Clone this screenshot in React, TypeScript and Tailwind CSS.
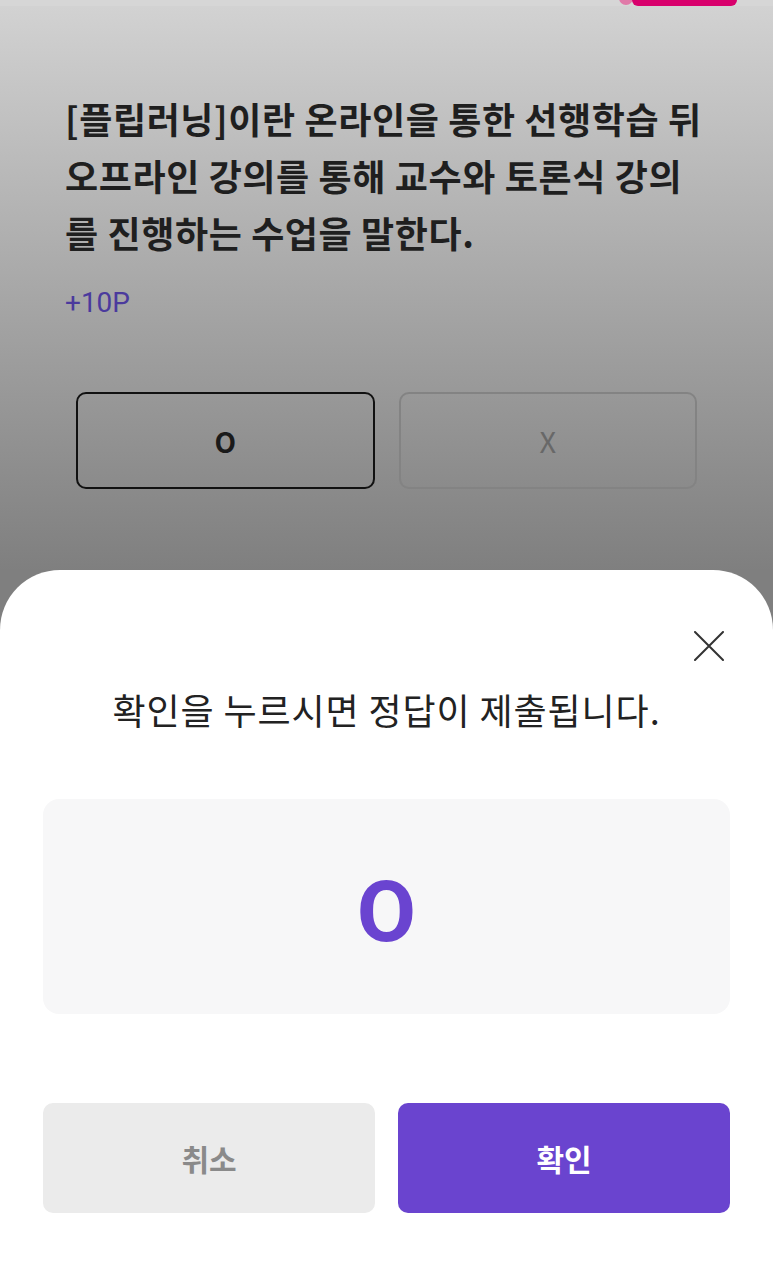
import React from "react";

const kr = "font-['Noto_Sans_CJK_KR',sans-serif]";
const roboto = "font-['Roboto','Noto_Sans_CJK_KR',sans-serif]";

function CloseIcon() {
  return (
    <svg width="30" height="30" viewBox="0 0 30 30" fill="none">
      <path d="M1 1L29 29M29 1L1 29" stroke="#333333" strokeWidth="2" strokeLinecap="round" />
    </svg>
  );
}

export default function App() {
  return (
    <div className={`w-full h-[1267px] flex flex-col bg-[#7f7f7f] overflow-hidden ${kr}`}>
      {/* dimmed page behind the sheet */}
      <div className="h-[571px] shrink-0 bg-linear-to-b from-[#d3d3d3] to-[#7f7f7f] flex flex-col">
        <div className="h-[6px] flex justify-end items-start pr-[36px] overflow-hidden bg-[#d6d6d6]">
          <div className="w-[14px] h-[14px] -mt-[9px] -mr-[1px] rounded-full bg-[#e07aa8]" />
          <div className="w-[105px] h-[16px] -mt-[10px] rounded-b-[6px] bg-[#d8006c]" />
        </div>

        <p className="mt-[84px] px-[65px] text-[36px] leading-[57px] tracking-[0.6px] font-bold text-[#1f1f1f]">
          [플립러닝]이란 온라인을 통한 선행학습 뒤
          <br />
          오프라인 강의를 통해 교수와 토론식 강의
          <br />를 진행하는 수업을 말한다.
        </p>

        <p className={`mt-[25px] px-[65px] text-[28px] leading-[34px] text-[#4b3a9d] ${roboto}`}>+10P</p>

        <div className="mt-[72px] mx-[76px] grid grid-cols-2 gap-[24px]">
          <button className="h-[97px] rounded-[10px] border-2 border-[#111111] flex items-center justify-center text-[28px] font-bold text-[#1a1a1a]">
            O
          </button>
          <button className="h-[97px] rounded-[10px] border-2 border-[#838383] flex items-center justify-center text-[29px] text-[#686868]">
            X
          </button>
        </div>
      </div>

      {/* bottom sheet */}
      <div className="-mt-px flex-1 bg-white rounded-t-[60px] flex flex-col">
        <div className="flex justify-end pr-[49px] pt-[61px]">
          <CloseIcon />
        </div>

        <h2 className="mt-[26px] text-center text-[36px] leading-[44px] tracking-[0.9px] text-[#222222]">
          확인을 누르시면 정답이 제출됩니다.
        </h2>

        <div className="mt-[68px] mx-[43px] h-[215px] pt-[10px] rounded-[16px] bg-[#f7f7f8] flex items-center justify-center">
          <span className={`text-[86px] leading-none font-bold text-[#6a44d0] ${roboto}`}>O</span>
        </div>

        <div className="mt-[89px] mx-[43px] grid grid-cols-2 gap-[23px]">
          <button className="h-[110px] rounded-[10px] bg-[#ebebeb] text-[30px] font-bold text-[#8a8a8a]">
            취소
          </button>
          <button className="h-[110px] rounded-[10px] bg-[#6a44cf] text-[30px] font-bold text-white">
            확인
          </button>
        </div>
      </div>
    </div>
  );
}
